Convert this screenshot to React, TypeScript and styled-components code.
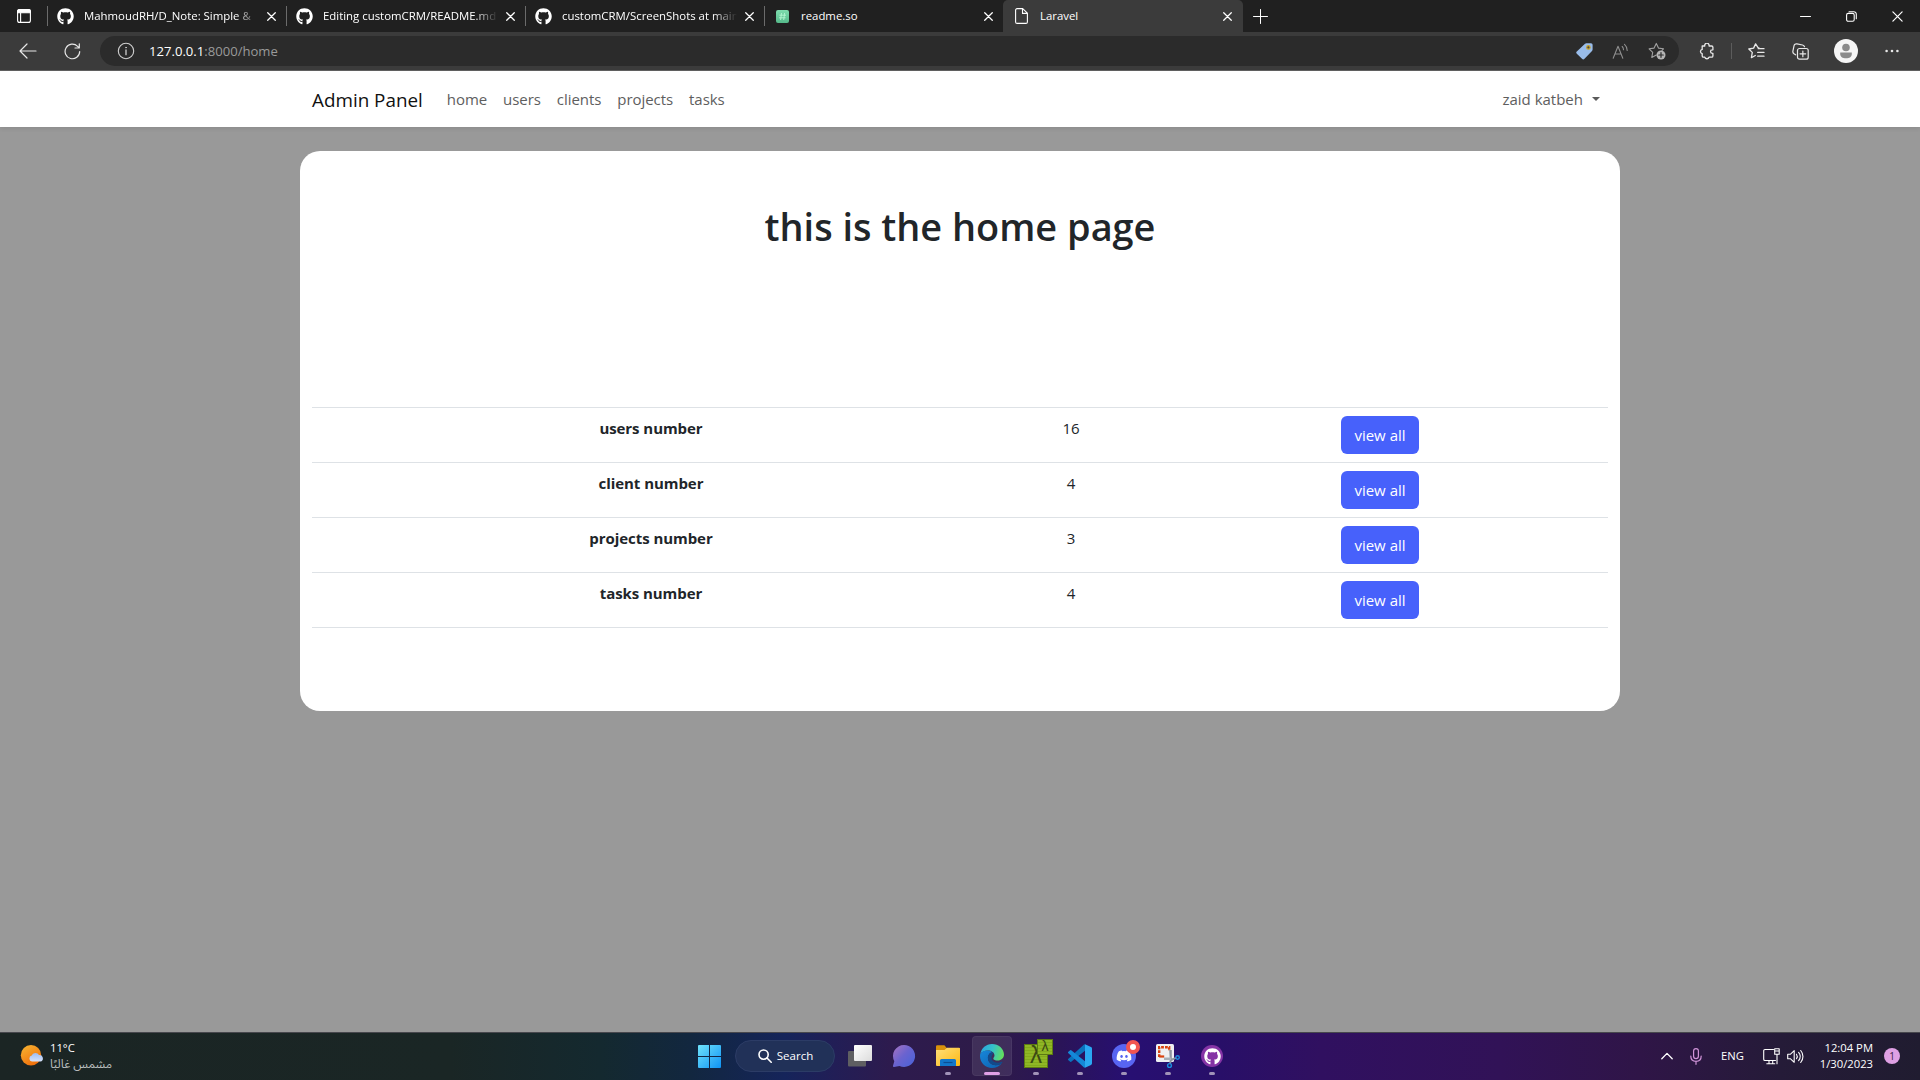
import React from "react";
import styled, { createGlobalStyle, css } from "styled-components";
import { FaGithub, FaDiscord } from "react-icons/fa";

const Global = createGlobalStyle`
  *, *::before, *::after { box-sizing: border-box; }
  html, body { margin: 0; padding: 0; overflow: hidden; }
  body {
    font-family: "Open Sans", "Noto Sans", "DejaVu Sans", sans-serif;
    font-size: 15px;
    line-height: 24px;
    color: #212529;
    background: #999999;
  }
  svg { display: block; flex: none; }
`;

const Desktop = styled.div`
  width: 1920px;
  height: 1080px;
  display: flex;
  flex-direction: column;
  overflow: hidden;
`;

/* ---------- browser tabs ---------- */
const TabStrip = styled.div`
  height: 32px;
  flex: none;
  display: flex;
  background: #202020;
  color: #fff;
`;
const TabActions = styled.div`
  width: 47px;
  padding: 9px 0 0 17px;
`;
const TabItem = styled.div<{ $active?: boolean }>`
  width: ${(p) => (p.$active ? 240 : 239)}px;
  height: 32px;
  display: flex;
  align-items: center;
  padding: 0 ${(p) => (p.$active ? "11px 0 12px" : "10px 0 10px")};
  font-size: 11.4px;
  border-radius: 5px 5px 0 0;
  ${(p) =>
    p.$active
      ? css`background: #3b3b3b;`
      : css`
          background: linear-gradient(#6b6b6b, #6b6b6b) 0 6px / 1px 20px no-repeat;
        `}
`;
const TabIcon = styled.span<{ $w?: number; $inset?: number }>`
  width: ${(p) => p.$w ?? 27}px;
  padding-left: ${(p) => p.$inset ?? 0}px;
  flex: none;
`;
const TabTitle = styled.span<{ $faded?: boolean }>`
  flex: 1;
  min-width: 0;
  white-space: nowrap;
  margin-right: 8px;
  ${(p) => p.$faded && css`mask-image: linear-gradient(90deg, #000 calc(100% - 24px), transparent);`}
`;
const NewTab = styled.div`
  padding: 9px 0 0 10px;
  flex: 1;
`;
const WindowButtons = styled.div`
  display: flex;
  align-items: center;
  gap: 35px;
  padding-right: 17px;
`;

/* ---------- address row ---------- */
const Toolbar = styled.div`
  height: 39px;
  flex: none;
  display: flex;
  align-items: center;
  background: #3b3b3b;
  border-bottom: 1px solid #606060;
  color: #e8e8e8;
`;
const NavButtons = styled.div`
  width: 100px;
  display: flex;
  gap: 27px;
  padding-left: 19px;
`;
const AddressBar = styled.div`
  width: 1579px;
  height: 30px;
  border-radius: 15px;
  background: #2b2b2b;
  display: flex;
  align-items: center;
  padding: 0 13px 0 17px;
`;
const Url = styled.div`
  flex: 1;
  padding-left: 14px;
  font-size: 13.1px;
  color: #9a9a9a;
`;
const UrlHost = styled.span`
  color: #fff;
`;
const AddressIcons = styled.div`
  display: flex;
  align-items: center;
  gap: 19px;
`;
const ToolbarIcons = styled.div`
  flex: 1;
  display: flex;
  align-items: center;
  padding-left: 20px;
`;
const ToolSlot = styled.div<{ $w: number }>`
  width: ${(p) => p.$w}px;
`;
const ToolRule = styled.div`
  width: 1px;
  height: 16px;
  margin-right: 16px;
  background: #5c5c5c;
`;

/* ---------- page ---------- */
const Page = styled.div`
  flex: 1;
  display: flex;
  flex-direction: column;
  align-items: center;
  background: #999999;
`;
const Navbar = styled.nav`
  width: 100%;
  height: 56px;
  background: #fff;
  box-shadow: 0 2px 4px rgba(0, 0, 0, 0.075);
  display: flex;
  justify-content: center;
`;
const NavInner = styled.div`
  width: 1296px;
  display: flex;
  align-items: center;
  padding-right: 8px;
  color: #5e5e5e;
`;
const Brand = styled.span`
  font-size: 18.85px;
  line-height: 30px;
  color: #101010;
  margin-right: 24px;
  padding-top: 2px;
`;
const NavLinks = styled.div`
  flex: 1;
  display: flex;
  gap: 16px;
  letter-spacing: -0.06px;
`;
const UserMenu = styled.div`
  display: flex;
  align-items: center;
  gap: 9px;
`;
const Caret = styled.i`
  border: 4.5px solid transparent;
  border-top-color: #5a5a5a;
  border-bottom: 0;
`;
const Card = styled.main`
  width: 1320px;
  height: 560px;
  margin-top: 24px;
  padding: 0 12px;
  border-radius: 20px;
  background: #fff;
`;
const Heading = styled.h1`
  margin: 0;
  height: 256px;
  padding-top: 51px;
  font-size: 37.9px;
  font-weight: 600;
  line-height: 48px;
  text-align: center;
`;
const Table = styled.div`
  border-top: 1px solid #dee2e6;
`;
const Row = styled.div`
  height: 55px;
  display: grid;
  grid-template-columns: 678px 162px 456px;
  padding-top: 8px;
  text-align: center;
  border-bottom: 1px solid #dee2e6;
`;
const Label = styled.div`
  font-weight: 700;
  letter-spacing: -0.06px;
`;
const Value = styled.div``;
const ViewButton = styled.button`
  width: 78px;
  height: 38px;
  padding: 0;
  border: 0;
  border-radius: 6px;
  background: #4761fb;
  color: #fff;
  font: inherit;
`;

/* ---------- taskbar ---------- */
const Taskbar = styled.footer`
  height: 48px;
  flex: none;
  display: grid;
  grid-template-columns: 688px 1fr 264px;
  align-items: center;
  padding-bottom: 1px;
  color: #fff;
  border-top: 1px solid #47474d;
  background: linear-gradient(
    90deg,
    #1b2524 0px,
    #1a2625 450px,
    #14292f 600px,
    #12273f 690px,
    #15245a 785px,
    #221e56 835px,
    #2d1b4e 890px,
    #2e1b48 990px,
    #2a1458 1060px,
    #270f72 1130px,
    #280f68 1220px,
    #301060 1320px,
    #311257 1500px,
    #2f1547 1640px,
    #251b38 1780px,
    #201c30 1920px
  );
`;
const Weather = styled.div`
  display: flex;
  align-items: center;
  gap: 6px;
  padding-left: 20px;
  font-size: 11.25px;
  line-height: 16px;
`;
const WeatherText = styled.div`
  display: flex;
  flex-direction: column;
`;
const Condition = styled.span`
  color: #b8bcbc;
  font-family: "Open Sans", "Noto Sans Arabic", "DejaVu Sans", sans-serif;
  font-size: 12px;
`;
const Apps = styled.div`
  display: flex;
  align-items: center;
  padding-left: 10px;
`;
const StartSlot = styled.div`
  width: 37px;
  padding-top: 1px;
`;
const SearchPill = styled.div`
  width: 100px;
  height: 32px;
  margin-right: 3px;
  border-radius: 16px;
  border: 1px solid #2c3c66;
  background: #213158;
  display: flex;
  align-items: center;
  justify-content: center;
  gap: 5px;
  font-size: 11.5px;
  padding-left: 1px;
`;
const AppSlot = styled.div<{ $active?: boolean }>`
  width: 40px;
  height: 40px;
  margin: 0 2px;
  position: relative;
  display: flex;
  align-items: center;
  justify-content: center;
  border-radius: 4px;
  ${(p) =>
    p.$active &&
    css`
      background: rgba(255, 255, 255, 0.09);
      box-shadow: inset 0 0 0 1px rgba(255, 255, 255, 0.05);
    `}
`;
const Indicator = styled.i<{ $active?: boolean }>`
  position: absolute;
  bottom: 1px;
  left: 50%;
  transform: translateX(-50%);
  width: ${(p) => (p.$active ? 16 : 6)}px;
  height: 3px;
  border-radius: 2px;
  background: ${(p) => (p.$active ? "#e0a0e6" : "#a193b8")};
`;
const DiscordDisc = styled.div`
  width: 24px;
  height: 24px;
  border-radius: 50%;
  background: #5865f2;
  display: flex;
  align-items: center;
  justify-content: center;
`;
const LiveDot = styled.i`
  position: absolute;
  top: 4px;
  left: 22px;
  width: 14px;
  height: 14px;
  border-radius: 50%;
  border: 4px solid #f25551;
  background: #fff;
`;
const GithubDisc = styled.div`
  width: 22px;
  height: 22px;
  border-radius: 50%;
  background: #8534a5;
  display: flex;
  align-items: center;
  justify-content: center;
`;
const LambdaTile = styled.div<{ $small?: boolean }>`
  position: absolute;
  ${(p) =>
    p.$small
      ? css`left: 21px; top: 3px; width: 16px; height: 16px; font-size: 14px; line-height: 13px;`
      : css`left: 8px; top: 8px; width: 24px; height: 24px; font-size: 24px; line-height: 20px;`}
  border: 1px solid #5c7a12;
  background: repeating-linear-gradient(#8fb725 0 2px, #83a91d 2px 3px);
  color: #3a4a14;
  font-family: "Liberation Sans", sans-serif;
  text-align: center;
`;
const Tray = styled.div`
  display: flex;
  align-items: center;
  padding-left: 5px;
  font-size: 11.25px;
  line-height: 16px;
`;
const TraySlot = styled.div<{ $w: number }>`
  width: ${(p) => p.$w}px;
  flex: none;
`;
const Clock = styled.div`
  width: 60px;
  margin-right: 11px;
  white-space: nowrap;
  display: flex;
  flex-direction: column;
  align-items: flex-end;
`;
const Badge = styled.div`
  width: 16px;
  height: 16px;
  border-radius: 50%;
  background: #dfa0e4;
  color: #3a2440;
  font-size: 10px;
  text-align: center;
`;

/* ---------- icons ---------- */
const stroke = (w = 1.1, color = "currentColor") => ({
  fill: "none",
  stroke: color,
  strokeWidth: w,
  strokeLinecap: "round" as const,
  strokeLinejoin: "round" as const,
});

const CloseIcon = ({ size = 9, w = 1.4 }: { size?: number; w?: number }) => (
  <svg width={size} height={size} viewBox="0 0 10 10" {...stroke(w)}>
    <path d="M.8.8l8.4 8.4M9.2.8L.8 9.2" />
  </svg>
);
const PanelIcon = () => (
  <svg width="14" height="14" viewBox="0 0 14 14" {...stroke(1.1)}>
    <rect x=".6" y=".6" width="12.8" height="12.8" rx="2" />
    <path d="M.6 2.2A1.6 1.6 0 0 1 2.2.6h9.6a1.6 1.6 0 0 1 1.6 1.6v1.6H.6z" fill="currentColor" />
    <path d="M3.6 4v9.4" />
  </svg>
);
const HashIcon = () => (
  <svg width="13" height="13" viewBox="0 0 13 13">
    <defs>
      <linearGradient id="hash" x1="0" y1="0" x2="0" y2="1">
        <stop offset="0" stopColor="#7fdcae" />
        <stop offset="1" stopColor="#55b98a" />
      </linearGradient>
    </defs>
    <rect width="13" height="13" rx="2" fill="url(#hash)" />
    <path d="M5.5 3L4.6 10M8.6 3l-.9 7M3.4 5.2h6.6M3 7.8h6.6" stroke="#b5f5d3" strokeWidth=".9" fill="none" />
  </svg>
);
const FileIcon = () => (
  <svg width="13" height="16" viewBox="0 0 13 16" {...stroke(1.1, "#fff")}>
    <path d="M2.1.6h5.6l4.7 4.6v8.7a1.5 1.5 0 0 1-1.5 1.5H2.1A1.5 1.5 0 0 1 .6 13.9V2.1A1.5 1.5 0 0 1 2.1.6zM7.5.8v4.6h4.7" />
  </svg>
);
const PlusIcon = () => (
  <svg width="15" height="15" viewBox="0 0 15 15" {...stroke(1)}>
    <path d="M7.5.5v14M.5 7.5h14" />
  </svg>
);
const MinimizeIcon = () => (
  <svg width="11" height="11" viewBox="0 0 11 11" {...stroke(1)}>
    <path d="M.5 5.5h10" />
  </svg>
);
const RestoreIcon = () => (
  <svg width="11" height="11" viewBox="0 0 11 11" {...stroke(1.1)}>
    <rect x=".6" y="2.4" width="7.6" height="7.9" rx="1.6" />
    <path d="M3 .7h4.8a2.5 2.5 0 0 1 2.5 2.5v4.6" />
  </svg>
);
const BackIcon = () => (
  <svg width="18" height="16" viewBox="0 0 18 16" {...stroke(1.2)}>
    <path d="M17 8H1M8 1L1 8l7 7" />
  </svg>
);
const ReloadIcon = () => (
  <svg width="17" height="17" viewBox="0 0 17 17" {...stroke(1.2)}>
    <path d="M15.7 8.5A7.3 7.3 0 1 1 13.6 3.3L15 4.7M15.3.8v4.2h-4.3" />
  </svg>
);
const InfoIcon = () => (
  <svg width="18" height="18" viewBox="0 0 18 18" {...stroke(1.1, "#d0d0d0")}>
    <circle cx="9" cy="9" r="7.7" />
    <path d="M9 8v4.7" strokeWidth="1.3" />
    <circle cx="9" cy="5.6" r=".5" fill="#d0d0d0" strokeWidth=".6" />
  </svg>
);
const TagIcon = () => (
  <svg width="17" height="17" viewBox="0 0 17 17">
    <path d="M9 .8a2 2 0 0 1 1.4-.6h4.6a1.6 1.6 0 0 1 1.6 1.6v4.7a2 2 0 0 1-.6 1.4l-7.5 7.9a1.8 1.8 0 0 1-2.5 0L.8 10.7a1.6 1.6 0 0 1 0-2.3z" fill="#99bce9" />
    <circle cx="12.4" cy="4.4" r="1.7" fill="#4b4a43" stroke="#c9a227" strokeWidth="1.2" />
  </svg>
);
const ReadAloudIcon = () => (
  <svg width="17" height="17" viewBox="0 0 17 17" {...stroke(1.1, "#8e8e8e")}>
    <path d="M1.2 15.2L6 3.2l4.8 12M2.9 11h6.2M10.2 3.5c.9.9 1.3 2 1.3 3.3M12.5 1.3c1.8 1.6 2.7 3.6 2.7 6.2" />
  </svg>
);
const AddFavouriteIcon = () => (
  <svg width="18" height="18" viewBox="0 0 18 18" {...stroke(1.1, "#a0a0a0")}>
    <path d="M8.3 13l-4.5 2.4.9-5L1.1 6.8l5-.7L8.3 1.4l2.2 4.7 5 .7-1.5 1.5" />
    <circle cx="13" cy="13" r="4.5" fill="#b4b4b4" stroke="none" />
    <path d="M13 10.7v4.6M10.7 13h4.6" stroke="#2b2b2b" strokeWidth="1.2" />
  </svg>
);
const PuzzleIcon = () => (
  <svg width="16" height="17" viewBox="0 0 16 17" {...stroke(1.3)}>
    <path d="M3.2 3h2.6a2.2 2.2 0 1 1 4.2 0h2.6a1.3 1.3 0 0 1 1.3 1.3v2.5h-.6a1.8 1.8 0 0 0 0 3.6h.6v2.5a1.3 1.3 0 0 1-1.3 1.3H10a2.2 2.2 0 0 1-4.2 0H4.5A1.3 1.3 0 0 1 3.2 12.9v-2.2a2.2 2.2 0 0 1 0-4.3z" />
  </svg>
);
const FavouritesIcon = () => (
  <svg width="17" height="17" viewBox="0 0 17 17" {...stroke(1.3)}>
    <path d="M11 4.9h-.8L7.6.9 5.6 5.1.8 6l3.5 3.4-.9 5.3 3.9-2.2M10.3 5.7h5.7M9.7 9.4H16M9.7 13.2H16" />
  </svg>
);
const CollectionsIcon = () => (
  <svg width="17" height="17" viewBox="0 0 17 17" {...stroke(1.2)}>
    <rect x="5.5" y="5.5" width="10.7" height="10.7" rx="2" />
    <path d="M10.85 8v5.7M8 10.85h5.7M3.6 11.8L2 10.7C.9 9.9.6 8.8 1 7.6L2 2.8C2.3 1.3 3.4.6 4.9.9l5.6 1.1c1 .2 1.7.8 2 1.7" />
  </svg>
);
const ProfileIcon = () => (
  <svg width="24" height="24" viewBox="0 0 24 24">
    <circle cx="12" cy="12" r="12" fill="#f5f5f5" />
    <circle cx="12" cy="8.5" r="3.8" fill="#8a8a8a" />
    <path d="M6.2 13.6h11.6v1.3c0 2.7-2.2 4.3-5.8 4.3s-5.8-1.6-5.8-4.3z" fill="#8a8a8a" />
  </svg>
);
const MoreIcon = () => (
  <svg width="14" height="4" viewBox="0 0 14 4" fill="currentColor">
    <circle cx="1.6" cy="2" r="1.3" />
    <circle cx="7" cy="2" r="1.3" />
    <circle cx="12.4" cy="2" r="1.3" />
  </svg>
);

const WeatherIcon = () => (
  <svg width="24" height="22" viewBox="0 0 24 22">
    <defs>
      <linearGradient id="sun" x1="0" y1="0" x2=".6" y2="1">
        <stop offset="0" stopColor="#f7b733" />
        <stop offset="1" stopColor="#f0700c" />
      </linearGradient>
      <linearGradient id="cloud" x1="0" y1="0" x2="0" y2="1">
        <stop offset="0" stopColor="#9dbcf3" />
        <stop offset="1" stopColor="#d7e3fa" />
      </linearGradient>
    </defs>
    <circle cx="11" cy="10.3" r="10.2" fill="url(#sun)" />
    <path d="M12 16.5a3 3 0 0 1-.3-5.9 4 4 0 0 1 7.3-.6 3.2 3.2 0 0 1 1.2 6.5z" fill="url(#cloud)" />
  </svg>
);
const StartIcon = () => (
  <svg width="23" height="23" viewBox="0 0 23 23">
    <defs>
      <linearGradient id="win" gradientUnits="userSpaceOnUse" x1="0" y1="0" x2="23" y2="23">
        <stop offset="0" stopColor="#6fe3fb" />
        <stop offset="1" stopColor="#0f93f5" />
      </linearGradient>
    </defs>
    <path d="M0 1a1 1 0 0 1 1-1h10v11H0zM12 0h10a1 1 0 0 1 1 1v10H12zM0 12h11v11H1a1 1 0 0 1-1-1zM12 12h11v10a1 1 0 0 1-1 1H12z" fill="url(#win)" />
  </svg>
);
const SearchIcon = () => (
  <svg width="14" height="14" viewBox="0 0 14 14" {...stroke(1.6)}>
    <circle cx="5.6" cy="5.6" r="4.6" />
    <path d="M9 9l4.2 4.2" />
  </svg>
);
const TaskViewIcon = () => (
  <svg width="24" height="24" viewBox="0 0 24 24">
    <defs>
      <linearGradient id="tv" x1="0" y1="0" x2="1" y2="1">
        <stop offset="0" stopColor="#fff" />
        <stop offset="1" stopColor="#dcdcdc" />
      </linearGradient>
    </defs>
    <rect x="0" y="7" width="18" height="15.5" rx="1" fill="#5f5f62" />
    <rect x="6" y="1" width="18" height="16" rx="1" fill="url(#tv)" />
  </svg>
);
const ChatIcon = () => (
  <svg width="24" height="24" viewBox="0 0 24 24">
    <defs>
      <linearGradient id="chat" x1="0" y1="0" x2="1" y2=".9">
        <stop offset="0" stopColor="#a974c0" />
        <stop offset=".5" stopColor="#6a63cf" />
        <stop offset="1" stopColor="#4a63d8" />
      </linearGradient>
    </defs>
    <path d="M12 1a11 11 0 1 1-4.5 21l-5.5 1c-.8.1-1.3-.5-1-1.3l1.3-4.5A11 11 0 0 1 12 1z" fill="url(#chat)" />
  </svg>
);
const FolderIcon = () => (
  <svg width="24" height="24" viewBox="0 0 24 24">
    <defs>
      <linearGradient id="folder" x1="0" y1="0" x2="1" y2="1">
        <stop offset="0" stopColor="#ffe07a" />
        <stop offset="1" stopColor="#fcb813" />
      </linearGradient>
    </defs>
    <path d="M0 2.5A1.2 1.2 0 0 1 1.2 1.3h7.2L10.8 4H23a1 1 0 0 1 1 1v7H0z" fill="#d9920b" />
    <path d="M0 6h8.5l2.5-2.3H23a1 1 0 0 1 1 1V21a1 1 0 0 1-1 1H1a1 1 0 0 1-1-1z" fill="url(#folder)" />
    <path d="M4 22v-5.5A1.5 1.5 0 0 1 5.5 15h13a1.5 1.5 0 0 1 1.5 1.5V22z" fill="#1277cb" />
    <path d="M7.5 18.5h9" stroke="#0b4f94" strokeWidth="1.2" />
  </svg>
);
const EdgeIcon = () => (
  <svg width="24" height="24" viewBox="0 0 24 24">
    <defs>
      <linearGradient id="edgeTop" x1="0" y1=".3" x2="1" y2=".5">
        <stop offset="0" stopColor="#2aa5df" />
        <stop offset=".5" stopColor="#35c1c9" />
        <stop offset="1" stopColor="#63e05c" />
      </linearGradient>
      <linearGradient id="edgeLow" x1="0" y1="0" x2="1" y2="1">
        <stop offset="0" stopColor="#1787da" />
        <stop offset="1" stopColor="#0d5fae" />
      </linearGradient>
    </defs>
    <path d="M.3 10C1.3 4.2 6 0 12 0c6.6 0 12 4.7 12 10.6 0 3.6-2.8 6-6.3 6-2.2 0-4.4-.6-4.4-2 0-.9 1.2-1.3 1.2-3.3 0-2.8-3-4.9-6.6-4.9C4.6 6.4 1.7 7.7.3 10z" fill="url(#edgeTop)" />
    <path d="M.2 10C2 7.2 5 6.3 7.9 6.4c1.8.1 3.6.8 4.8 1.9C9.8 8.5 7.9 11 7.9 14c0 4.2 3.6 7.2 8 7.2 2.3 0 4.2-.7 5.9-1.9C19.6 22.2 16 24 12 24 5.4 24 0 18.7 0 12z" fill="url(#edgeLow)" />
    <path d="M12.7 8.3C9.8 8.5 7.9 11 7.9 14c0 4.2 3.6 7.2 8 7.2 2.7 0 5-1 6.5-2.8.3-.5-.1-.9-.6-.7-5.2 2.3-9.9.2-10.3-3.7-.1-1.2.2-2.3.9-3.2.8-1 1-2 .3-2.5z" fill="#124a8a" />
  </svg>
);
const CodeIcon = () => (
  <svg width="24" height="24" viewBox="0 0 24 24">
    <path d="M17 .2v6.5L3.2 17.7a1 1 0 0 1-1.3-.1L.4 16.3a1 1 0 0 1 0-1.5L16 .6z" fill="#0a72bd" />
    <path d="M17 23.8v-6.5L3.2 6.3a1 1 0 0 0-1.3.1L.4 7.7a1 1 0 0 0 0 1.5L16 23.4z" fill="#1488d8" />
    <path d="M17 .2L23 3a1.6 1.6 0 0 1 1 1.4v15.2a1.6 1.6 0 0 1-1 1.4l-6 2.8z" fill="#2aa8f2" />
  </svg>
);
const SnipIcon = () => (
  <svg width="24" height="26" viewBox="0 0 24 26">
    <rect x="0" y="1" width="18" height="18" rx="1.5" fill="#eef0f3" />
    <path d="M3.2 14V4.2h10V8" fill="none" stroke="#d8420f" strokeWidth="2.4" strokeDasharray="2.8 1.1" />
    <path d="M3.2 13.5h5" fill="none" stroke="#d8420f" strokeWidth="2.2" />
    <path d="M13.2 7h2.6v8.5l4-1.6.8 1.6-5 2.6-.6 3-1.8-.4.6-4.2z" fill="#8d969f" />
    <path d="M8 14.5h7V17H8z" fill="#a8b0b8" />
    <circle cx="21.6" cy="14.5" r="1.7" fill="none" stroke="#1b8fe0" strokeWidth="1.4" />
    <circle cx="13.5" cy="22.5" r="1.9" fill="none" stroke="#1b8fe0" strokeWidth="1.4" />
  </svg>
);
const ChevronIcon = () => (
  <svg width="12" height="8" viewBox="0 0 12 8" {...stroke(1.3)}>
    <path d="M.8 6.8L6 1.4l5.2 5.4" />
  </svg>
);
const MicIcon = () => (
  <svg width="12" height="17" viewBox="0 0 12 17" {...stroke(1.2, "#d093d8")}>
    <rect x="3.6" y=".7" width="4.8" height="10" rx="2.4" />
    <path d="M.8 8c0 3.3 2 5.3 5.2 5.3S11.2 11.3 11.2 8M6 13.3v3" />
  </svg>
);
const NetworkIcon = () => (
  <svg width="17" height="17" viewBox="0 0 17 17" {...stroke(1.1)}>
    <path d="M10.5 1.5H2A1.3 1.3 0 0 0 .7 2.8v8.4A1.3 1.3 0 0 0 2 12.5h10.5M3.800 15.700h8M6 12.700v3M9.700 12.700v3M11.700.8h4.500v5.400h-4.500zM14 6.400v9.300M11.700 3h4.500" />
  </svg>
);
const VolumeIcon = () => (
  <svg width="17" height="15" viewBox="0 0 17 15" {...stroke(1.1)}>
    <path d="M.7 5.3h2.6L7.2 1.7v11.6L3.3 9.7H.7zM9.5 5.3c.9 1.3.9 3.1 0 4.4M11.6 3.4c2 2.4 2 5.8 0 8.2M13.7 1.5c3 3.500 3 8.500 0 12" />
  </svg>
);

const TABS = [
  { title: "MahmoudRH/D_Note: Simple &", icon: "github" },
  { title: "Editing customCRM/README.md", icon: "github" },
  { title: "customCRM/ScreenShots at main", icon: "github" },
  { title: "readme.so", icon: "hash" },
];
const LINKS = ["home", "users", "clients", "projects", "tasks"];
const ROWS = [
  { label: "users number", value: 16 },
  { label: "client number", value: 4 },
  { label: "projects number", value: 3 },
  { label: "tasks number", value: 4 },
];

export default function App() {
  return (
    <Desktop>
      <Global />
      <TabStrip>
        <TabActions>
          <PanelIcon />
        </TabActions>
        {TABS.map((tab) => (
          <TabItem key={tab.title}>
            <TabIcon $inset={tab.icon === "hash" ? 2 : 0}>
              {tab.icon === "github" ? <FaGithub size={17} /> : <HashIcon />}
            </TabIcon>
            <TabTitle $faded={tab.icon === "github"}>{tab.title}</TabTitle>
            <CloseIcon />
          </TabItem>
        ))}
        <TabItem $active>
          <TabIcon $w={25}>
            <FileIcon />
          </TabIcon>
          <TabTitle>Laravel</TabTitle>
          <CloseIcon />
        </TabItem>
        <NewTab>
          <PlusIcon />
        </NewTab>
        <WindowButtons>
          <MinimizeIcon />
          <RestoreIcon />
          <CloseIcon size={11} w={1.1} />
        </WindowButtons>
      </TabStrip>

      <Toolbar>
        <NavButtons>
          <BackIcon />
          <ReloadIcon />
        </NavButtons>
        <AddressBar>
          <InfoIcon />
          <Url>
            <UrlHost>127.0.0.1</UrlHost>:8000/home
          </Url>
          <AddressIcons>
            <TagIcon />
            <ReadAloudIcon />
            <AddFavouriteIcon />
          </AddressIcons>
        </AddressBar>
        <ToolbarIcons>
          <ToolSlot $w={32}>
            <PuzzleIcon />
          </ToolSlot>
          <ToolRule />
          <ToolSlot $w={44}>
            <FavouritesIcon />
          </ToolSlot>
          <ToolSlot $w={42}>
            <CollectionsIcon />
          </ToolSlot>
          <ToolSlot $w={51}>
            <ProfileIcon />
          </ToolSlot>
          <MoreIcon />
        </ToolbarIcons>
      </Toolbar>

      <Page>
        <Navbar>
          <NavInner>
            <Brand>Admin Panel</Brand>
            <NavLinks>
              {LINKS.map((link) => (
                <span key={link}>{link}</span>
              ))}
            </NavLinks>
            <UserMenu>
              zaid katbeh
              <Caret />
            </UserMenu>
          </NavInner>
        </Navbar>
        <Card>
          <Heading>this is the home page</Heading>
          <Table>
            {ROWS.map((row) => (
              <Row key={row.label}>
                <Label>{row.label}</Label>
                <Value>{row.value}</Value>
                <div>
                  <ViewButton>view all</ViewButton>
                </div>
              </Row>
            ))}
          </Table>
        </Card>
      </Page>

      <Taskbar>
        <Weather>
          <WeatherIcon />
          <WeatherText>
            <span>11°C</span>
            <Condition>مشمس غالبًا</Condition>
          </WeatherText>
        </Weather>
        <Apps>
          <StartSlot>
            <StartIcon />
          </StartSlot>
          <SearchPill>
            <SearchIcon />
            Search
          </SearchPill>
          <AppSlot>
            <TaskViewIcon />
          </AppSlot>
          <AppSlot>
            <ChatIcon />
          </AppSlot>
          <AppSlot>
            <FolderIcon />
            <Indicator />
          </AppSlot>
          <AppSlot $active>
            <EdgeIcon />
            <Indicator $active />
          </AppSlot>
          <AppSlot>
            <LambdaTile>λ</LambdaTile>
            <LambdaTile $small>λ</LambdaTile>
            <Indicator />
          </AppSlot>
          <AppSlot>
            <CodeIcon />
            <Indicator />
          </AppSlot>
          <AppSlot>
            <DiscordDisc>
              <FaDiscord size={16} />
            </DiscordDisc>
            <LiveDot />
            <Indicator />
          </AppSlot>
          <AppSlot>
            <SnipIcon />
            <Indicator />
          </AppSlot>
          <AppSlot>
            <GithubDisc>
              <FaGithub size={17} />
            </GithubDisc>
            <Indicator />
          </AppSlot>
        </Apps>
        <Tray>
          <TraySlot $w={29}>
            <ChevronIcon />
          </TraySlot>
          <TraySlot $w={31}>
            <MicIcon />
          </TraySlot>
          <TraySlot $w={42}>ENG</TraySlot>
          <TraySlot $w={24}>
            <NetworkIcon />
          </TraySlot>
          <TraySlot $w={26}>
            <VolumeIcon />
          </TraySlot>
          <Clock>
            <span>12:04 PM</span>
            <span>1/30/2023</span>
          </Clock>
          <Badge>1</Badge>
        </Tray>
      </Taskbar>
    </Desktop>
  );
}
